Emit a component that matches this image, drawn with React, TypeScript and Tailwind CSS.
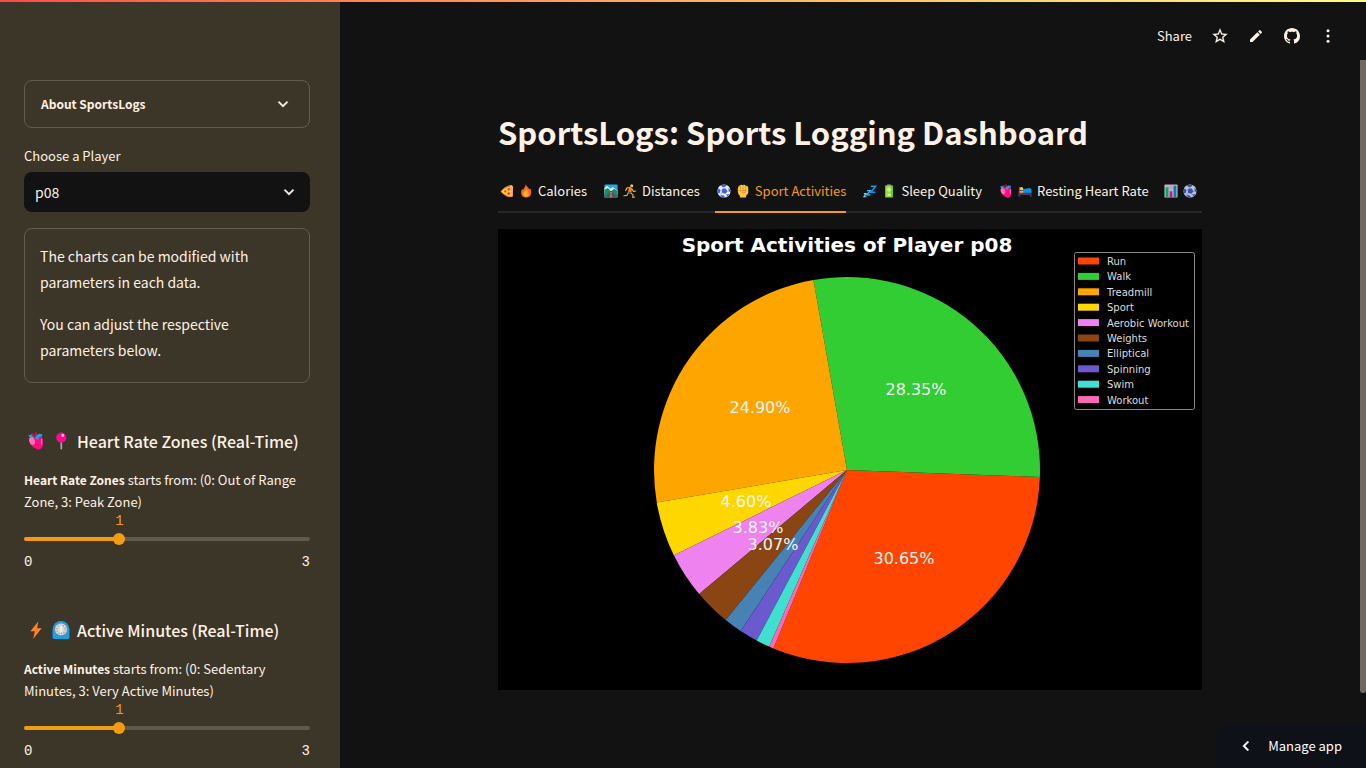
import React, { useState } from "react";

type IconProps = { size?: string };

function Art({ size = "h-3.5 w-3.5", children }: IconProps & { children: React.ReactNode }) {
  return (
    <svg viewBox="0 0 32 32" className={`${size} shrink-0`} aria-hidden="true">
      {children}
    </svg>
  );
}

const Pizza = () => (
  <Art>
    <path d="M1 17C8 9 16 3 26 2l4 5-1 21c-8 3-12 3-16-1-5-3-9-6-12-10z" fill="#d67d35" />
    <path d="M3 17C10 10 17 7 25 6l1 22c-9 1-17-5-23-11z" fill="#ffc83d" />
    <path d="M23 2c3 0 6 2 7 4l-1 22c0 2-4 2-4 0z" fill="#f3ad61" />
    <circle cx="20" cy="12" r="3" fill="#f23b3f" />
    <circle cx="12" cy="17" r="2.6" fill="#f23b3f" />
    <circle cx="20" cy="22" r="3.2" fill="#f23b3f" />
  </Art>
);

const Fire = () => (
  <Art>
    <path d="M15 1c2 4 7 8 9 11l2-2c3 7 4 20-9 21C4 31 3 20 7 11l2 3c1-4 6-7 6-13z" fill="#ff6723" />
    <path d="M17 11c3 5 6 7 5 12 0 4-3 6-6 6s-7-3-6-8c0-3 6-5 7-10z" fill="#ffb02e" />
  </Art>
);

const Road = () => (
  <Art>
    <rect x="1" y="1" width="30" height="30" rx="2" fill="#26a5e8" />
    <path d="M1 9l6-5 8 7 5-4 11 8v8H1z" fill="#d8f0f2" />
    <path d="M1 13l8-4 7 8 7-6 8 5v15H1z" fill="#208b68" />
    <path d="M14 16h4l11 15H3z" fill="#575067" />
    <path d="M15 18h2v4h-2zm0 6h2v7h-2z" fill="#ffc83d" />
  </Art>
);

const Runner = () => (
  <Art>
    <circle cx="20" cy="4" r="3.5" fill="#ffc83d" />
    <path d="M17 8L9 9l-3 6M20 11l4 6 5-1" fill="none" stroke="#ffc83d" strokeWidth="2.5" strokeLinecap="round" />
    <path d="M14 8l7 1-2 11-8-2z" fill="#ff7a26" />
    <path d="M12 17l8 2-1 4-8-2z" fill="#46506a" />
    <path d="M12 20l-3 6-7 1M18 21l5 4-1 5h4" fill="none" stroke="#e9b23a" strokeWidth="2.5" strokeLinecap="round" />
  </Art>
);

const Ball = () => (
  <Art>
    <circle cx="16" cy="16" r="15" fill="#e9eefa" />
    <path d="M12 11l8-1 4 7-5 5-8-2z" fill="#3f5fe0" />
    <path d="M9 3l7-2 6 2-4 4h-6zM1 13l4-3 3 5-2 6-4 0zM26 8l4 5 1 6-4-2zM9 25l7 1 2 5c-5 0-8-2-10-4zM23 24l5-2c-1 3-3 5-6 7z" fill="#3f5fe0" />
    <path d="M16 7l-1 4M8 15l4-2M24 17l4-3M11 20l-3 5M19 22l4 3" stroke="#7c8ce4" strokeWidth="1.5" />
  </Art>
);

const Fist = () => (
  <Art>
    <path d="M4 13c0-3 1-8 4-9 2-3 5-3 8-1 2-2 5-1 6 1 4-1 6 2 6 5v10c0 4-3 6-5 8v4H9v-4c-4-3-5-8-5-14z" fill="#ffc83d" />
    <path d="M10 4v10M16 4v10M22 5v9M6 15c5 2 10-1 17 0 1 4-4 5-8 5" fill="none" stroke="#dd8a2f" strokeWidth="1.8" strokeLinecap="round" />
  </Art>
);

const Sleep = () => (
  <Art>
    <path d="M18 5h11L18 19h10" fill="none" stroke="#0b9ae8" strokeWidth="3.5" />
    <path d="M9 15h8L8 25h9" fill="none" stroke="#46bdf3" strokeWidth="2.8" />
    <path d="M2 22h5l-5 7h6" fill="none" stroke="#83d2f8" strokeWidth="2.3" />
  </Art>
);

const Battery = () => (
  <Art>
    <path d="M12 1h8v4h-8z" fill="#9b9b9b" />
    <rect x="7" y="3" width="18" height="28" rx="2" fill="#73c81f" />
    <rect x="9" y="5" width="12" height="24" rx="1" fill="#94e13b" />
    <path d="M15 8h3v3h3v3h-3v3h-3v-3h-3v-3h3zM13 23h7v3h-7z" fill="#e6f8cf" />
  </Art>
);

const Heart = ({ size }: IconProps) => (
  <Art size={size}>
    <path d="M11 9L8 3l3-1 3 5V1h4v6l4-5 3 2-4 7z" fill="#cf1040" />
    <path d="M4 14C4 8 9 7 14 9c4-3 11-2 14 2v13c-1 6-6 9-11 6C10 27 4 22 4 14z" fill="#ff0b82" />
    <path d="M2 6l6-2 3 5-4 2zM15 12c0-7 6-9 12-8v4c-5 0-7 2-7 6z" fill="#12a4ef" />
    <ellipse cx="9" cy="16" rx="5" ry="7" fill="#ff70b3" transform="rotate(-18 9 16)" />
    <path d="M26 13v9" stroke="#ff8cc5" strokeWidth="2" />
  </Art>
);

const Bed = () => (
  <Art>
    <path d="M1 17h30v12h-4v-4H5v4H1z" fill="#533566" />
    <path d="M2 7h3v13H2z" fill="#765080" />
    <path d="M10 12l17-3c3 1 4 3 4 5v6H11z" fill="#0d91e6" />
    <circle cx="8" cy="11" r="4" fill="#ffc83d" />
    <path d="M4 16h8v4H4z" fill="#ffad38" />
  </Art>
);

const Bars = () => (
  <Art>
    <rect x="1" y="1" width="30" height="30" rx="2" fill="#e5d9f0" />
    <path d="M1 9h30M1 17h30M1 25h30" stroke="#b9a5ce" />
    <path d="M4 8h6v23H4z" fill="#00c985" />
    <path d="M13 17h6v14h-6z" fill="#f51d86" />
    <path d="M22 4h6v27h-6z" fill="#0895df" />
  </Art>
);

const Pin = ({ size }: IconProps) => (
  <Art size={size}>
    <path d="M15 17h3v12l-1.500 3-1.500-3z" fill="#aaa7a6" />
    <circle cx="16.500" cy="10" r="9" fill="#ff0790" />
    <circle cx="19" cy="6" r="2.700" fill="#ffb8df" />
  </Art>
);

const Bolt = ({ size }: IconProps) => (
  <Art size={size}>
    <path d="M20 1L6 18h8l-3 14 15-19h-8z" fill="#ff822d" />
  </Art>
);

const Timer = ({ size }: IconProps) => (
  <Art size={size}>
    <path d="M1 29V15a15 15 0 0130 0v14c0 2-1 3-3 3H4c-2 0-3-1-3-3z" fill="#13a3e8" />
    <circle cx="16" cy="15" r="12" fill="#86888b" />
    <circle cx="16" cy="15" r="10.500" fill="#d9dadb" />
    <circle cx="16" cy="15" r="7.500" fill="none" stroke="#8f9092" strokeWidth="2" strokeDasharray="2 2.700" />
    <path d="M16 8v11" stroke="#f5f5f5" strokeWidth="3" />
  </Art>
);

function Chevron({ d }: { d: string }) {
  return (
    <svg viewBox="0 0 24 24" className="h-5 w-5" fill="currentColor" stroke="currentColor" strokeWidth="0.4" aria-hidden="true">
      <path d={d} />
    </svg>
  );
}

const DOWN = "M7.410 8.590L12 13.170l4.590-4.580L18 10l-6 6-6-6z";
const LEFT = "M15.410 7.410L14 6l-6 6 6 6 1.410-1.410L10.830 12z";

const slices = [
  { name: "Run", count: 80, color: "#ff4500" },
  { name: "Walk", count: 74, color: "#32cd32" },
  { name: "Treadmill", count: 65, color: "#ffa500" },
  { name: "Sport", count: 12, color: "#ffd700" },
  { name: "Aerobic Workout", count: 10, color: "#ee82ee" },
  { name: "Weights", count: 8, color: "#8b4513" },
  { name: "Elliptical", count: 4, color: "#4682b4" },
  { name: "Spinning", count: 4, color: "#6a5acd" },
  { name: "Swim", count: 3, color: "#40e0d0" },
  { name: "Workout", count: 1, color: "#ff69b4" },
];

const shares = [
  { text: "30.65%", x: 406, y: 335 },
  { text: "28.35%", x: 418, y: 166 },
  { text: "24.90%", x: 262, y: 184 },
  { text: "4.60%", x: 248, y: 278 },
  { text: "3.83%", x: 260, y: 304 },
  { text: "3.07%", x: 275, y: 321 },
];

function ActivityPie() {
  const total = slices.reduce((sum, s) => sum + s.count, 0);
  const cx = 349;
  const cy = 241;
  const r = 193;
  let angle = -112;
  const point = (deg: number) => {
    const rad = (deg * Math.PI) / 180;
    return `${(cx + r * Math.cos(rad)).toFixed(2)} ${(cy - r * Math.sin(rad)).toFixed(2)}`;
  };
  angle = -112.4;
  return (
    <svg
      viewBox="0 0 704 461"
      className="block w-full bg-black font-['DejaVu_Sans',sans-serif]"
      role="img"
      aria-label="Sport Activities of Player p08"
    >
      <text x="349" y="23" textAnchor="middle" fill="#ffffff" className="text-[20px] font-bold">
        Sport Activities of Player p08
      </text>
      {slices.map((s) => {
        const from = angle;
        angle += (s.count / total) * 360;
        return <path key={s.name} d={`M${cx} ${cy}L${point(from)}A${r} ${r} 0 0 0 ${point(angle)}Z`} fill={s.color} />;
      })}
      {shares.map((s) => (
        <text key={s.text} x={s.x} y={s.y} textAnchor="middle" fill="#f5f5f5" className="text-[16px]">
          {s.text}
        </text>
      ))}
      <rect x="576.500" y="23.500" width="120" height="157" rx="2" fill="#000000" stroke="#8a8a8a" />
      {slices.map((s, i) => (
        <g key={s.name}>
          <rect x="580" y={28.500 + i * 15.400} width="21" height="7" fill={s.color} />
          <text x="609" y={36 + i * 15.400} fill="#dddddd" className="text-[10px]">
            {s.name}
          </text>
        </g>
      ))}
    </svg>
  );
}

function LevelSlider({ id, label, children }: { id: string; label: string; children: React.ReactNode }) {
  const [value, setValue] = useState(1);
  const share = `${(value / 3) * 100}%`;
  return (
    <div>
      <label htmlFor={id} className="block text-[13px] leading-[22px]">
        <b className="text-xs leading-[22px]">{label}</b> {children}
      </label>
      <div className="relative h-4 font-['Liberation_Mono',monospace] text-sm leading-4 text-[#f39c12]">
        <output htmlFor={id} className="absolute -translate-x-1/2" style={{ left: share }}>
          {value}
        </output>
      </div>
      <div className="relative flex h-5 items-center">
        <div className="h-1 w-full overflow-hidden rounded-full bg-[#605a4a]">
          <div className="h-full bg-[#f39c12]" style={{ width: share }} />
        </div>
        <input
          id={id}
          type="range"
          min={0}
          max={3}
          value={value}
          onChange={(e) => setValue(Number(e.target.value))}
          className="absolute -inset-x-1.5 h-5 cursor-pointer appearance-none bg-transparent [&::-webkit-slider-thumb]:h-3 [&::-webkit-slider-thumb]:w-3 [&::-webkit-slider-thumb]:appearance-none [&::-webkit-slider-thumb]:rounded-full [&::-webkit-slider-thumb]:bg-[#f39c12]"
        />
      </div>
      <div className="mt-[3px] flex justify-between font-['Liberation_Mono',monospace] text-sm leading-5">
        <span>0</span>
        <span>3</span>
      </div>
    </div>
  );
}

const tabs = [
  { label: "Calories", icons: [Pizza, Fire] },
  { label: "Distances", icons: [Road, Runner] },
  { label: "Sport Activities", icons: [Ball, Fist] },
  { label: "Sleep Quality", icons: [Sleep, Battery] },
  { label: "Resting Heart Rate", icons: [Heart, Bed] },
];

export default function App() {
  const [active, setActive] = useState("Sport Activities");
  const bigIcon = "h-[18px] w-[18px]";
  return (
    <div className="relative flex h-screen overflow-hidden bg-[#121212] font-['Noto_Sans_CJK_SC','Noto_Sans',sans-serif] text-[#fff1e6]">
      <div className="absolute inset-x-0 top-0 z-10 h-0.5 bg-linear-to-r from-[#ff4b4b] to-[#fffd80]" />

      <aside className="w-[340px] shrink-0 overflow-hidden bg-[#3c3628] pt-20 pr-[30px] pl-6">
        <details className="rounded-lg border border-[#625c4c]">
          <summary className="flex h-[46px] cursor-pointer list-none items-center justify-between px-4 text-xs font-bold">
            About SportsLogs
            <Chevron d={DOWN} />
          </summary>
        </details>

        <label htmlFor="player" className="mt-4 block text-[13px] leading-6">
          Choose a Player
        </label>
        <div className="relative mt-1">
          <select
            id="player"
            defaultValue="p08"
            className="h-10 w-full cursor-pointer appearance-none rounded-lg bg-[#121212] px-[11px] text-[14px]"
          >
            <option>p08</option>
          </select>
          <span className="pointer-events-none absolute top-2.5 right-[11px]">
            <Chevron d={DOWN} />
          </span>
        </div>

        <div className="mt-4 rounded-lg border border-[#625c4c] px-[15px] pt-[14px] pb-[19px] text-[14px] leading-[26px]">
          <p>The charts can be modified with parameters in each data.</p>
          <p className="mt-4">You can adjust the respective parameters below.</p>
        </div>

        <section className="pt-[46px]">
          <h3 className="flex h-6 items-center gap-[7px] pl-[3px] text-base font-medium whitespace-nowrap">
            <Heart size={bigIcon} />
            <Pin size={bigIcon} />
            Heart Rate Zones (Real-Time)
          </h3>
          <div className="mt-4">
            <LevelSlider id="heart" label="Heart Rate Zones">
              starts from: (0: Out of Range Zone, 3: Peak Zone)
            </LevelSlider>
          </div>
        </section>

        <section className="pt-[46px]">
          <h3 className="flex h-6 items-center gap-[7px] pl-[3px] text-base font-medium whitespace-nowrap">
            <Bolt size={bigIcon} />
            <Timer size={bigIcon} />
            Active Minutes (Real-Time)
          </h3>
          <div className="mt-4">
            <LevelSlider id="minutes" label="Active Minutes">
              starts from: (0: Sedentary Minutes, 3: Very Active Minutes)
            </LevelSlider>
          </div>
        </section>
      </aside>

      <div className="flex min-w-0 flex-1 flex-col">
        <header className="flex h-[60px] shrink-0 items-center justify-end gap-3 pt-3 pr-[26px] text-[13px]">
          <button className="pr-1">Share</button>
          <button className="flex w-6 justify-center" aria-label="Favorite">
            <svg viewBox="0 0 24 24" className="h-[18px] w-[18px]" fill="currentColor" stroke="currentColor" strokeWidth="0.3">
              <path d="M22 9.240l-7.190-.62L12 2 9.190 8.630 2 9.240l5.460 4.730L5.820 21 12 17.270 18.180 21l-1.630-7.030L22 9.240zM12 15.400l-3.760 2.270 1-4.280-3.320-2.880 4.380-.38L12 6.100l1.710 4.040 4.380.38-3.320 2.880 1 4.280L12 15.400z" />
            </svg>
          </button>
          <button className="flex w-6 justify-center" aria-label="Edit">
            <svg viewBox="0 0 24 24" className="h-4 w-4" fill="currentColor">
              <path d="M3 17.250V21h3.750L17.810 9.940l-3.750-3.750L3 17.250zM20.710 7.040a1 1 0 000-1.410l-2.340-2.340a1 1 0 00-1.410 0l-1.830 1.830 3.750 3.750 1.830-1.830z" />
            </svg>
          </button>
          <button className="flex w-6 justify-center" aria-label="View source">
            <svg viewBox="0 0 16 16" className="h-4 w-4" fill="currentColor">
              <path d="M8 0C3.580 0 0 3.580 0 8c0 3.540 2.290 6.530 5.470 7.590.4.070.55-.17.55-.38 0-.19-.01-.82-.01-1.490-2.010.37-2.530-.49-2.690-.94-.09-.23-.48-.94-.82-1.130-.28-.15-.68-.52-.01-.53.63-.01 1.080.58 1.230.82.72 1.210 1.870.87 2.330.66.07-.52.28-.87.51-1.070-1.780-.2-3.640-.89-3.640-3.950 0-.87.31-1.590.82-2.150-.08-.2-.36-1.020.08-2.120 0 0 .67-.21 2.200.82.64-.18 1.320-.27 2-.27s1.360.09 2 .27c1.530-1.040 2.200-.82 2.200-.82.44 1.100.16 1.920.08 2.120.51.56.82 1.270.82 2.150 0 3.070-1.870 3.750-3.650 3.950.29.25.54.73.54 1.480 0 1.070-.01 1.930-.01 2.200 0 .21.15.46.55.38A8.010 8.010 0 0016 8c0-4.420-3.580-8-8-8z" />
            </svg>
          </button>
          <button className="flex w-6 justify-center" aria-label="More options">
            <svg viewBox="0 0 24 24" className="h-[18px] w-[18px]" fill="currentColor">
              <circle cx="12" cy="5" r="2" />
              <circle cx="12" cy="12" r="2" />
              <circle cx="12" cy="19" r="2" />
            </svg>
          </button>
        </header>

        <main className="w-full px-4 pt-[44px] pr-[22px]">
          <div className="mx-auto max-w-[704px]">
            <h1 className="text-[31px] leading-[56px] font-bold">SportsLogs: Sports Logging Dashboard</h1>
            <div
              role="tablist"
              className="mt-[13px] flex h-10 gap-[15px] overflow-hidden text-[13px] whitespace-nowrap shadow-[inset_0_-2px_#262626]"
            >
              {tabs.map(({ label, icons }) => (
                <button
                  key={label}
                  role="tab"
                  aria-selected={label === active}
                  onClick={() => setActive(label)}
                  className="flex shrink-0 items-center gap-[5px] border-b-2 border-transparent pb-0.5 pl-0.5 aria-selected:border-[#f39c12] aria-selected:text-[#f39c12]"
                >
                  {icons.map((Icon, i) => (
                    <Icon key={i} />
                  ))}
                  {label}
                </button>
              ))}
              <button
                role="tab"
                aria-selected={false}
                aria-label="All charts"
                className="flex shrink-0 items-center gap-[5px] border-b-2 border-transparent pb-0.5 opacity-80"
              >
                <Bars />
                <Ball />
              </button>
            </div>
            <div className="mt-4">
              <ActivityPie />
            </div>
          </div>
        </main>
      </div>

      <div className="absolute top-[60px] right-0 bottom-[75px] w-1.5 rounded-b-full bg-[#706862]" />

      <button className="absolute right-0 bottom-0 flex h-11 items-center gap-3 rounded-tl-xl bg-[#0e1117] pr-6 pl-5 text-[13px] text-white">
        <Chevron d={LEFT} />
        Manage app
      </button>
    </div>
  );
}
